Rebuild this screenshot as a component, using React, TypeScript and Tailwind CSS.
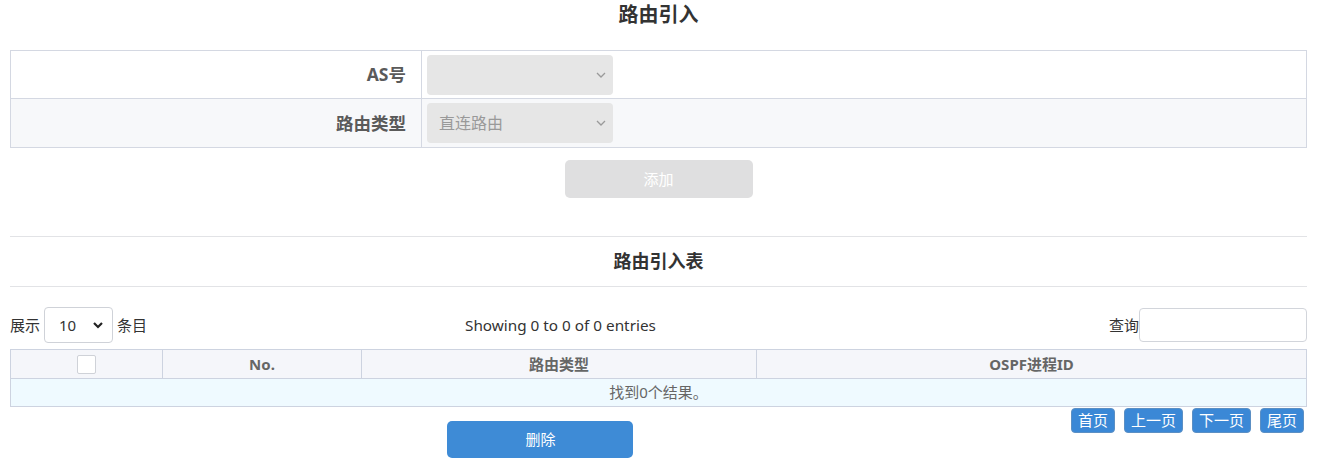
function Chevron() {
  return (
    <svg width="14" height="14" viewBox="0 0 14 14" className="text-[#9a9a9a]">
      <path d="M3 5 L7 9 L11 5" fill="none" stroke="currentColor" strokeWidth="1.3" />
    </svg>
  );
}

function FakeSelect({ value }: { value?: string }) {
  return (
    <div className="ml-[5px] flex h-[40px] w-[186px] items-center justify-between rounded-[4px] bg-[#e6e6e6] pl-[12px] pr-[5px] text-[16px] text-[#999]">
      <span>{value}</span>
      <Chevron />
    </div>
  );
}

const pages = ["首页", "上一页", "下一页", "尾页"];

export default function App() {
  return (
    <div className="bg-white px-[10px] font-['Noto_Sans','Noto_Sans_CJK_SC',sans-serif] text-[#333]">
      <h2 className="h-[30px] text-center text-[20px] font-bold leading-[30px] text-[#333]">
        路由引入
      </h2>

      {/* 表单 */}
      <div className="mt-[20px] border border-[#d4d8e2]">
        <div className="box-border flex h-[48px] border-b border-[#d4d8e2] bg-white">
          <div className="flex w-[411px] items-center justify-end border-r border-[#d4d8e2] pr-[15px] text-[17.5px] font-bold text-[#5a5a5a]">
            AS号
          </div>
          <div className="flex items-center">
            <FakeSelect />
          </div>
        </div>
        <div className="flex h-[48px] bg-[#f7f8fa]">
          <div className="flex w-[411px] items-center justify-end border-r border-[#d4d8e2] pr-[15px] text-[17.5px] font-bold text-[#5a5a5a]">
            路由类型
          </div>
          <div className="flex items-center">
            <FakeSelect value="直连路由" />
          </div>
        </div>
      </div>

      <div className="mt-[12px] flex justify-center">
        <button className="h-[38px] w-[188px] rounded-[5px] bg-[#dfdfe0] text-[15px] text-white">
          添加
        </button>
      </div>

      <div className="mt-[38px] flex h-[51px] items-center justify-center border-y border-[#e2e3e6] text-[18px] font-bold text-[#333]">
        路由引入表
      </div>

      {/* 表格控制 */}
      <div className="mt-[20px] grid h-[36px] grid-cols-[455px_1fr_auto] items-center text-[15px]">
        <div className="flex items-center">
          <span>展示</span>
          <div className="mx-[4px] flex h-[36px] w-[69px] items-center justify-between rounded-[4px] border border-[#cfd2d8] pl-[14px] pr-[8px]">
            <span>10</span>
            <svg width="12" height="12" viewBox="0 0 12 12">
              <path d="M2 4 L6 8 L10 4" fill="none" stroke="#222" strokeWidth="2.2" />
            </svg>
          </div>
          <span>条目</span>
        </div>
        <div className="text-[15.3px]">Showing 0 to 0 of 0 entries</div>
        <div className="flex items-center">
          <span>查询</span>
          <div className="h-[34px] w-[168px] rounded-[4px] border border-[#d2d5db]" />
        </div>
      </div>

      {/* 数据表 */}
      <div className="mt-[6px] border border-[#cdd3e0] text-[15px]">
        <div className="grid h-[29px] grid-cols-[152px_199px_395px_1fr] border-b border-[#cdd3e0] bg-[#f5f6fa] font-bold text-[#666]">
          <div className="flex items-center justify-center border-r border-[#cdd3e0]">
            <div className="h-[19px] w-[19px] rounded-[2px] border border-[#cfd2d8] bg-white" />
          </div>
          <div className="flex items-center justify-center border-r border-[#cdd3e0]">No.</div>
          <div className="flex items-center justify-center border-r border-[#cdd3e0]">路由类型</div>
          <div className="flex items-center justify-center">OSPF进程ID</div>
        </div>
        <div className="flex h-[27px] items-center justify-center bg-[#effaff] text-[#666]">
          找到0个结果。
        </div>
      </div>

      <div className="flex">
        <div className="flex flex-1 justify-center pt-[14px]">
          <button className="h-[37px] w-[186px] rounded-[5px] bg-[#3e8bd6] text-[15px] text-white">
            删除
          </button>
        </div>
        <div className="mr-[3px] mt-[1px] flex gap-[9px] self-start">
          {pages.map((p) => (
            <button
              key={p}
              className="h-[25px] rounded-[4px] border border-[#5b8fc4] bg-[#3b88d6] px-[6px] text-[15px] leading-[23px] text-white"
            >
              {p}
            </button>
          ))}
        </div>
      </div>
    </div>
  );
}
